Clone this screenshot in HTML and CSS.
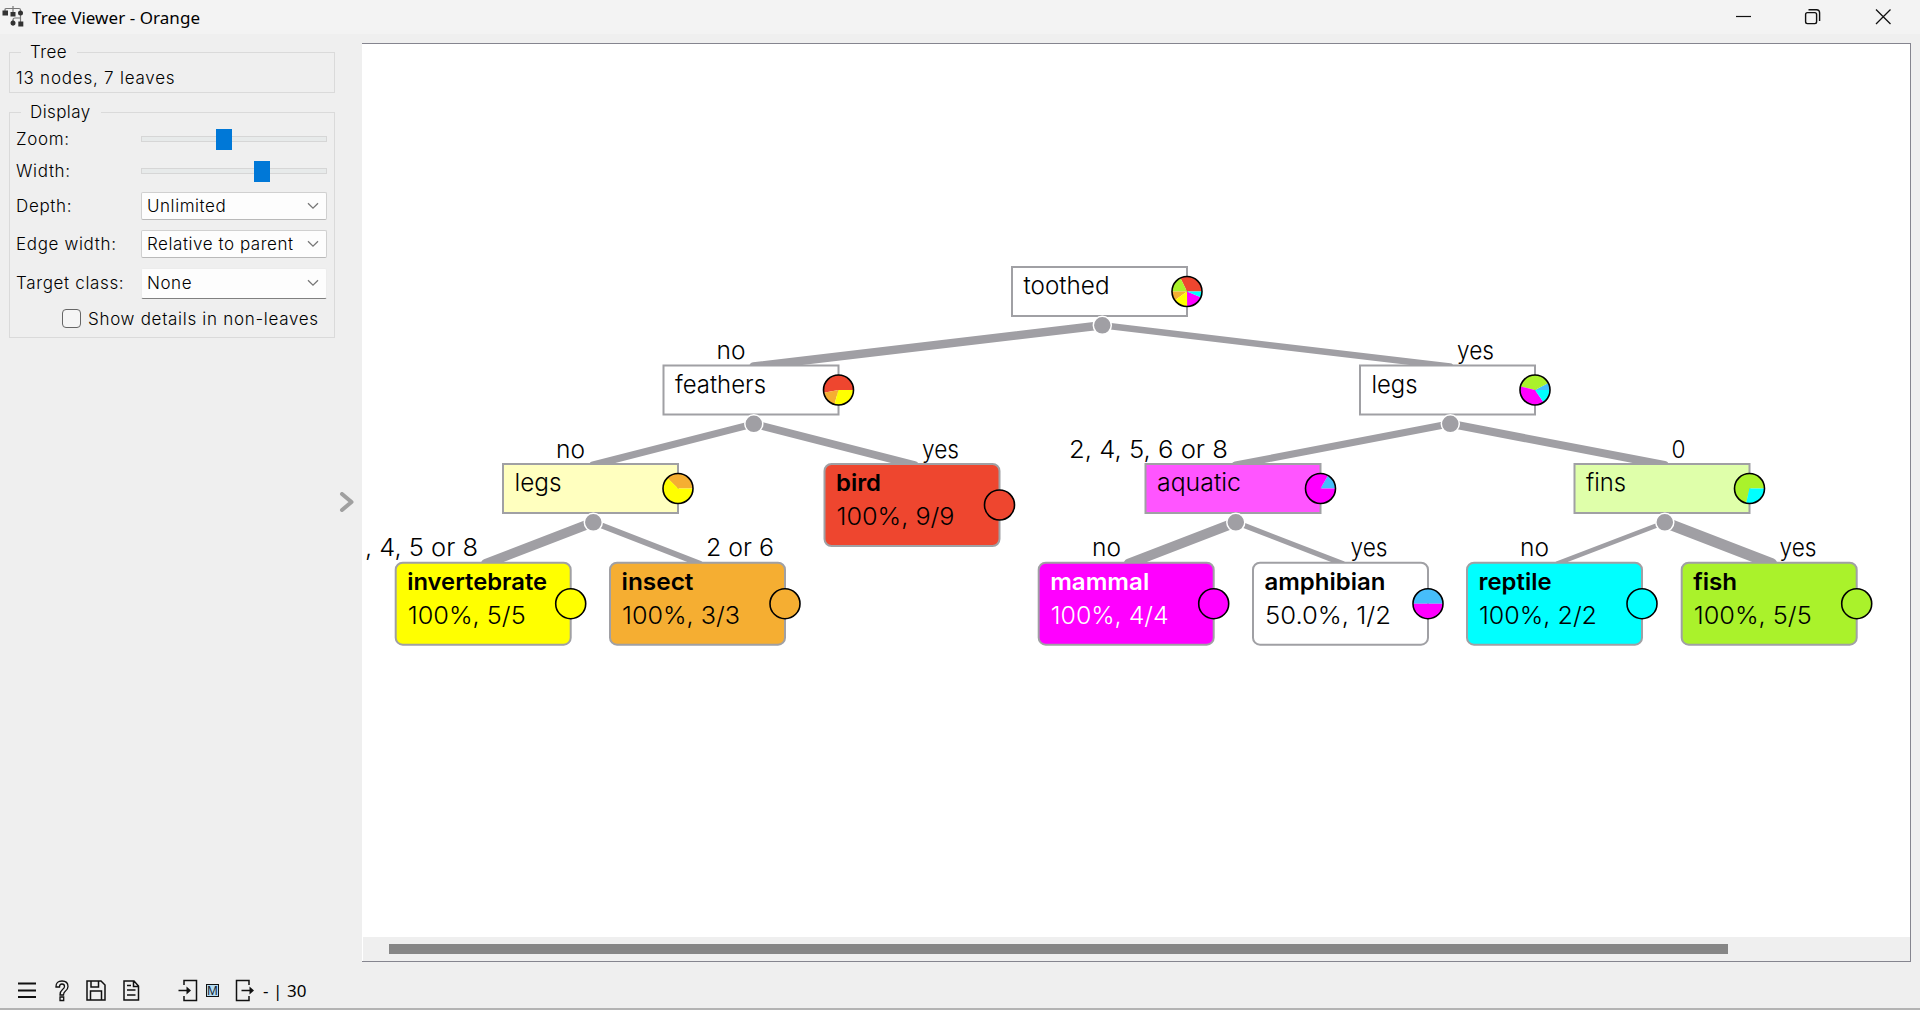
FILE: index.html
```html
<!DOCTYPE html>
<html lang="en">
<head>
<meta charset="utf-8">
<title>Tree Viewer - Orange</title>
<link rel="stylesheet" href="styles.css">
</head>
<body>
<header class="titlebar">
  <svg class="app-icon" width="22" height="22" viewBox="0 0 22 22">
    <path d="M3 7V3.500Q3 2.500 4.500 2.500H17Q18.500 2.500 18.500 4V7M11 0V8M11 18V14Q11 12 13 12H18.500M18.500 9V16" fill="none" stroke="#777" stroke-width="1.200"/>
    <path d="M11 14V20" stroke="#777"/>
    <rect x="0.500" y="4.500" width="5.500" height="5" fill="#333"/><rect x="8.500" y="6" width="5" height="4.500" fill="#333"/>
    <circle cx="18.500" cy="7" r="2.500" fill="#333"/><circle cx="11" cy="17" r="2.500" fill="#333"/><rect x="16.300" y="15.500" width="5" height="5" fill="#333"/>
  </svg>
  <h1 class="title">Tree Viewer - Orange</h1>
  <svg class="window-buttons" width="160" height="20" viewBox="0 0 160 20" fill="none" stroke="#111">
    <path d="M1 9.500H16" stroke-width="1.200"/>
    <rect x="70.600" y="5.600" width="11" height="11" rx="1.800" stroke-width="1.400"/>
    <path d="M73.500 2.700H81.500Q84.600 2.700 84.600 5.800V14" stroke-width="1.400"/>
    <path d="M141 2.500L155.500 17M155.500 2.500L141 17" stroke-width="1.300"/>
  </svg>
</header>
<main class="workspace">
  <aside class="sidebar">
    <fieldset class="group group-tree">
      <legend class="legend">Tree</legend>
      <p class="summary">13 nodes, 7 leaves</p>
    </fieldset>
    <fieldset class="group group-display">
      <legend class="legend">Display</legend>
      <div class="row row-slider"><span class="label">Zoom:</span><div class="slider"><i class="thumb" style="left:74px"></i></div></div>
      <div class="row row-slider"><span class="label">Width:</span><div class="slider"><i class="thumb" style="left:112px"></i></div></div>
      <div class="row row-depth"><span class="label">Depth:</span><div class="select"><span>Unlimited</span><svg class="caret" width="12" height="8" viewBox="0 0 12 8"><path d="M1 1.200L6 6.200L11 1.200"/></svg></div></div>
      <div class="row row-edge"><span class="label">Edge width:</span><div class="select"><span>Relative to parent</span><svg class="caret" width="12" height="8" viewBox="0 0 12 8"><path d="M1 1.200L6 6.200L11 1.200"/></svg></div></div>
      <div class="row row-target"><span class="label">Target class:</span><div class="select select-focus"><span>None</span><svg class="caret" width="12" height="8" viewBox="0 0 12 8"><path d="M1 1.200L6 6.200L11 1.200"/></svg></div></div>
      <div class="check"><i class="box"></i><span>Show details in non-leaves</span></div>
    </fieldset>
  </aside>
  <div class="splitter"><svg width="16" height="20" viewBox="0 0 16 20"><path d="M3 2L12.500 10L3 18" fill="none" stroke="#a0a0a0" stroke-width="4" stroke-linecap="round" stroke-linejoin="round"/></svg></div>
  <section class="view">
    <svg class="tree" id="tree" width="1548" height="893" viewBox="362 44 1548 893"></svg>
    <div class="scrollbar"><div class="handle"></div></div>
  </section>
</main>
<footer class="statusbar">
  <svg class="tools" width="310" height="26" viewBox="0 0 310 26" fill="none" stroke="#111" stroke-width="1.500">
    <path d="M18 4.500H36M18 11.500H36M18 18H36" stroke-width="2.200"/>
    <path d="M56 7.500Q56 2 62 2Q68 2 68 7.500Q68 10 65.500 12Q63.500 13.500 63.500 16H60Q60 12.500 62.500 10.500Q64.500 9 64.500 7.500Q64.500 5 62 5Q59.500 5 59.500 8H56ZM60 18H63.700V21.500H60Z" stroke-width="1.300"/>
    <path d="M87 2H101L105 6V21H87ZM91 2V8H98.500V2M90.500 21V12H101.500V21" stroke-width="1.500"/>
    <path d="M124 2H134L138.500 7V21H124ZM133.500 2V7.500H138.500M127 6.500H131M127 11H135.500M127 16H135.500" stroke-width="1.500"/>
    <path d="M184 6V1.500H196.500V21.500H184V17M178.500 11.500H189"/><path d="M186.500 7.500L191 11.500L186.500 15.500Z" fill="#111" stroke="none"/>
    <rect x="206.500" y="5.500" width="12" height="12" fill="#b5dcf2" stroke-width="1"/>
    <text class="badge" x="212.500" y="16">M</text>
    <path d="M249 6V1.500H236.500V21.500H249V17M241.500 11.500H252"/><path d="M249.500 7.500L254 11.500L249.500 15.500Z" fill="#111" stroke="none"/>
    <text class="counts" x="263" y="17.500" textLength="43.500">- | 30</text>
  </svg>
</footer>
<script src="tree.js"></script>
</body>
</html>
```
FILE: styles.css
```css
* { box-sizing: border-box; }
body {
  margin: 0; width: 1920px; height: 1010px; overflow: hidden;
  display: flex; flex-direction: column;
  background: #efefef; color: #000;
  font-family: Inter, "Liberation Sans", sans-serif; font-weight: 300; font-size: 17px;
}
.titlebar { height: 34px; flex: none; display: flex; align-items: center; background: #f3f3f3; padding: 0 25px 0 2px; }
.app-icon { margin-right: 8px; }
.title { margin: 0 auto 0 0; font: 400 17px "Noto Sans", sans-serif; letter-spacing: 0.05px; }
.window-buttons { margin-top: -1px; }
.workspace { flex: 1; display: flex; min-height: 0; padding: 9px 9px 0 9px; }
.sidebar { width: 326px; flex: none; }
.group { margin: 0; border: 1px solid #dadada; padding: 0 0 0 6px; min-width: 0; }
.legend { margin-left: 5px; padding: 0 10px 0 9px; height: 19px; line-height: 18px; letter-spacing: 0.4px; }
.group-tree { height: 50px; }
.group-display { height: 235px; margin-top: 10px; }
.summary { margin: 5px 0 0; line-height: 22px; letter-spacing: 0.78px; }
.row { display: flex; align-items: center; justify-content: space-between; padding-right: 7px; }
.row-slider { height: 32px; }
.group-display .row-slider:nth-of-type(1) { margin-top: 1px; }
.label { letter-spacing: 0.65px; white-space: nowrap; }
.slider { position: relative; width: 186px; height: 6px; background: #e7eaea; border: 1px solid #d6d6d6; }
.thumb { position: absolute; top: -8px; width: 16px; height: 21px; background: #0078d7; }
.select {
  width: 186px; height: 28px; display: flex; align-items: center; justify-content: space-between;
  padding: 0 7px 0 5px; background: #fdfdfd; border: 1px solid #d0d0d0; border-bottom-color: #b9b9b9; border-radius: 2px;
  letter-spacing: 0.55px; white-space: nowrap;
}
.select-focus { height: 31px; border-color: #ececec; border-bottom-color: #808080; }
.caret { flex: none; fill: none; stroke: #777; stroke-width: 1.3; }
.row-depth { height: 38px; }
.row-edge { height: 38px; }
.row-target { height: 40px; }
.check { display: flex; align-items: center; gap: 7px; margin: 0 0 0 46px; height: 31px; white-space: nowrap; letter-spacing: 0.7px; }
.box { width: 19px; height: 19px; border: 1.5px solid #666; border-radius: 4px; background: #f5f5f5; }
.splitter { width: 27px; flex: none; padding-top: 449px; padding-left: 4px; }
.view { width: 1549px; height: 919px; border: 1px solid #85858f; border-left: 0; background: #fff; display: flex; flex-direction: column; }
.tree { display: block; flex: none; }
.scrollbar { flex: 1; background: #efefef; padding: 7px 182px 7px 26px; margin-left: 1px; }
.handle { height: 10px; background: #868686; }
.statusbar { height: 49px; flex: none; border-bottom: 2px solid #b3b3b3; padding-top: 18px; }
.tools { display: block; }
.badge { font: 400 12px "Noto Sans", sans-serif; fill: #123; stroke: none; text-anchor: middle; }
.counts { font: 400 17px "Noto Sans", sans-serif; fill: #000; stroke: none; }
.node { stroke: #a0a0a4; stroke-width: 2; }
.edge { stroke: #a09fa4; stroke-linecap: round; }
.joint { fill: #a09fa4; stroke: #fff; stroke-width: 1.5; }
.ring { fill: none; stroke: #000; stroke-width: 1.6; }
.text { font-size: 24px; fill: #000; }
.class-name { font-weight: 600; font-size: 23.5px; }
.light { fill: #fff; }
```
FILE: tree.js
```js
const RED = '#ee462f', YELLOW = '#ffff00', ORANGE = '#f5ae32', MAGENTA = '#ff00ff',
      BLUE = '#46bdfa', CYAN = '#00ffff', GREEN = '#aaf22b';

// Pie slices are [color, share], counter-clockwise from three o'clock.
const nodes = {
  toothed: { x: 1012, y: 267, w: 86, fill: '#fff', pie: [[RED, 116], [GREEN, 64], [ORANGE, 36], [YELLOW, 55], [MAGENTA, 66], [CYAN, 23]] },
  feathers: { x: 663.5, y: 365.5, w: 91, fill: '#fff', pie: [[RED, 9], [ORANGE, 3], [YELLOW, 5]] },
  legs2: { name: 'legs', x: 1360, y: 365.5, w: 46, fill: '#fff', pie: [[BLUE, 1], [GREEN, 5], [MAGENTA, 5], [CYAN, 2]] },
  legs: { x: 503, y: 464, w: 47, fill: '#ffffbf', pie: [[ORANGE, 3], [YELLOW, 5]] },
  bird: { x: 824.5, y: 464, w: 45, fill: RED, stat: '100%, 9/9', sw: 118 },
  aquatic: { x: 1145.5, y: 464, w: 84, fill: '#ff55ff', pie: [[BLUE, 1], [MAGENTA, 5]] },
  fins: { x: 1574.5, y: 464, w: 40, fill: '#dfffaa', pie: [[GREEN, 5], [CYAN, 2]] },
  invertebrate: { x: 395.7, y: 562.7, w: 140, fill: YELLOW, stat: '100%, 5/5', sw: 118 },
  insect: { x: 610, y: 562.7, w: 72, fill: ORANGE, stat: '100%, 3/3', sw: 118 },
  mammal: { x: 1038.7, y: 562.7, w: 99, fill: MAGENTA, stat: '100%, 4/4', sw: 118, light: true },
  amphibian: { x: 1253, y: 562.7, w: 121, fill: '#fff', stat: '50.0%, 1/2', sw: 126, pie: [[BLUE, 1], [MAGENTA, 1]] },
  reptile: { x: 1467, y: 562.7, w: 73, fill: CYAN, stat: '100%, 2/2', sw: 118 },
  fish: { x: 1681.7, y: 562.7, w: 44, fill: GREEN, stat: '100%, 5/5', sw: 118 }
};
// [parent, child, line width, label, label x, label width]
const edges = [
  ['toothed', 'feathers', 8.5, 'no', 716.5, 29],
  ['toothed', 'legs2', 6.5, 'yes', 1457, 37],
  ['feathers', 'legs', 7, 'no', 556, 29],
  ['feathers', 'bird', 7.8, 'yes', 922, 37],
  ['legs2', 'aquatic', 7, '2, 4, 5, 6 or 8', 1069, 159],
  ['legs2', 'fins', 8, '0', 1671.5, 14],
  ['legs', 'invertebrate', 9.5, ', 4, 5 or 8', 365, 113],
  ['legs', 'insect', 5.8, '2 or 6', 706, 68],
  ['aquatic', 'mammal', 10, 'no', 1092, 29],
  ['aquatic', 'amphibian', 5.3, 'yes', 1350.5, 37],
  ['fins', 'reptile', 4.6, 'no', 1520, 29],
  ['fins', 'fish', 11, 'yes', 1779.5, 37]
];

const text = (x, y, w, s, cls = '') =>
  `<text class="text ${cls}" x="${x}" y="${y}" textLength="${w}" lengthAdjust="spacingAndGlyphs">${s}</text>`;

let out = '';
for (const [from, to, width] of edges) {
  const a = nodes[from], b = nodes[to];
  out += `<line class="edge" x1="${a.x + 90.3}" y1="${a.y + 58.3}" x2="${b.x + 90}" y2="${b.y + 1}" stroke-width="${width}"/>`;
}
for (const [key, n] of Object.entries(nodes)) {
  const h = n.stat ? 82 : 49, cx = n.x + 175, cy = n.y + h / 2, r = 15;
  out += `<rect class="node" x="${n.x}" y="${n.y}" width="175" height="${h}" rx="${n.stat ? 7 : 0}" fill="${n.fill}"/>`;
  if (n.pie) {
    const total = n.pie.reduce((s, p) => s + p[1], 0);
    let t = 0;
    for (const [color, count] of n.pie) {
      const e = t + count / total * 2 * Math.PI;
      out += `<path fill="${color}" d="M${cx} ${cy}L${cx + r * Math.cos(t)} ${cy - r * Math.sin(t)}A${r} ${r} 0 ${e - t > Math.PI ? 1 : 0} 0 ${cx + r * Math.cos(e)} ${cy - r * Math.sin(e)}Z"/>`;
      t = e;
    }
  } else {
    out += `<circle cx="${cx}" cy="${cy}" r="${r}" fill="${n.fill}"/>`;
  }
  out += `<circle class="ring" cx="${cx}" cy="${cy}" r="${r}"/>`;
  const light = n.light ? ' light' : '';
  out += text(n.x + 11.5, n.y + 27.3, n.w, n.name || key, (n.stat ? 'class-name' : '') + light);
  if (n.stat) out += text(n.x + 12, n.y + 61.3, n.sw, n.stat, light);
  else out += `<circle class="joint" cx="${n.x + 90.3}" cy="${n.y + 58.3}" r="9"/>`;
}
for (const [, to, , label, x, w] of edges) out += text(x, nodes[to].y - 6.500, w, label);
document.getElementById('tree').innerHTML = out;
```
